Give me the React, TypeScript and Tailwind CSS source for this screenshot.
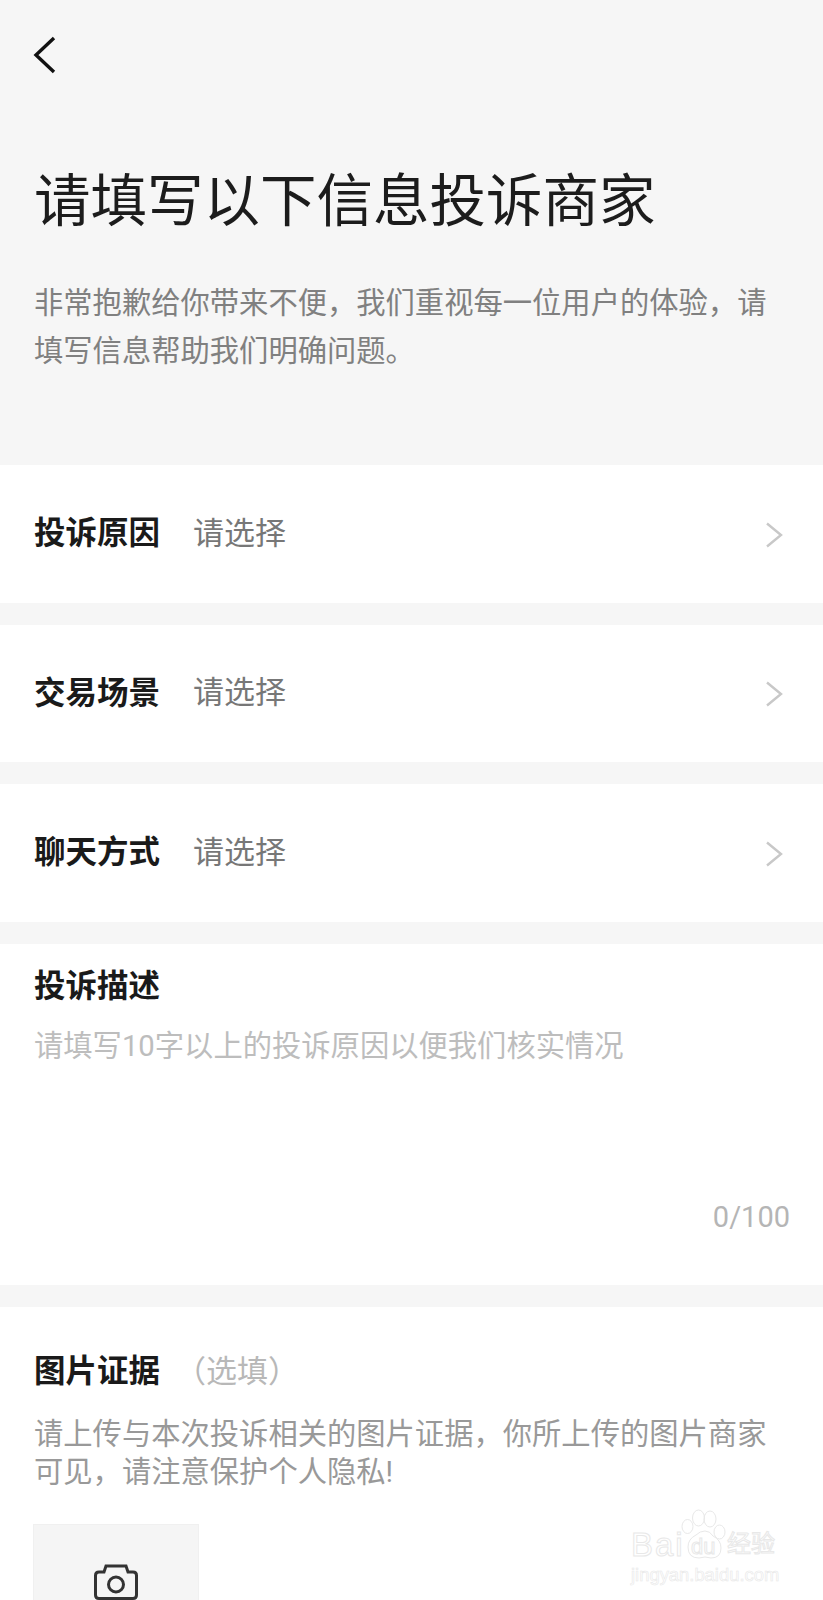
const cjk = "font-['Roboto','Noto_Sans_CJK_SC',sans-serif]";

const Chevron = () => (
  <svg width="20" height="28" viewBox="0 0 20 28" fill="none" stroke="#c8c8c8" strokeWidth="2.4" className="mt-[2px]">
    <path d="M3 2.5 L17 14 L3 25.5" />
  </svg>
);

const SelectRow = ({ label }: { label: string }) => (
  <div className="h-[137.5px] bg-white flex items-center pl-[34px] pr-[39px]">
    <div className="w-[159px] text-[31.5px] font-bold text-[#1a1a1a]">{label}</div>
    <div className="flex-1 text-[31px] text-[#777777]">请选择</div>
    <Chevron />
  </div>
);

const outline = "text-transparent [-webkit-text-stroke:1px_#e8e8e8] font-['Liberation_Sans',sans-serif]";

export default function App() {
  return (
    <div className={`${cjk} w-[823px] h-[1600px] overflow-hidden bg-[#f6f6f6] relative`}>
      <div className="h-[465px] pl-[34px] pr-[40px] pt-[36px]">
        <svg width="26" height="38" viewBox="0 0 26 38" fill="none" stroke="#111111" strokeWidth="3.4" className="-ml-[2px]">
          <path d="M22 2 L4 19 L22 36" />
        </svg>
        <h1 className="mt-[88px] text-[56.5px] leading-[80px] font-normal text-[#1c1c1c] whitespace-nowrap">请填写以下信息投诉商家</h1>
        <p className="mt-[37px] text-[29.3px] leading-[48px] text-[#808080]">
          非常抱歉给你带来不便，我们重视每一位用户的体验，请填写信息帮助我们明确问题。
        </p>
      </div>

      <div className="flex flex-col gap-[22px]">
        <SelectRow label="投诉原因" />
        <SelectRow label="交易场景" />
        <SelectRow label="聊天方式" />

        <div className="h-[341px] bg-white pl-[34px] pr-[33px] pt-[20px] flex flex-col">
          <div className="text-[31.5px] leading-[46px] font-bold text-[#1a1a1a]">投诉描述</div>
          <div className="mt-[14px] text-[29.3px] leading-[44px] text-[#bdbdbd]">请填写10字以上的投诉原因以便我们核实情况</div>
          <div className="mt-[127px] text-right text-[29px] leading-[44px] text-[#b5b5b5]">0/100</div>
        </div>

        <div className="bg-white pl-[34px] pr-[40px] pt-[33px] h-[400px]">
          <div className="flex items-center">
            <div className="text-[31.5px] leading-[64px] font-bold text-[#1a1a1a]">图片证据</div>
            <div className="ml-[15px] text-[31px] leading-[64px] text-[#b8b8b8]">（选填）</div>
          </div>
          <p className="mt-[11px] text-[29.3px] leading-[38.5px] text-[#999999]">
            请上传与本次投诉相关的图片证据，你所上传的图片商家可见，请注意保护个人隐私!
          </p>
          <div className="mt-[32px] -ml-[1px] w-[166px] h-[166px] bg-[#f5f5f5] border border-[#f0f0f0] flex justify-center pt-[39px]">
            <svg width="44" height="36" viewBox="0 0 44 36" fill="none" stroke="#333333" strokeWidth="3">
              <path d="M5 8 H10 L12 2 H32 L34 8 H39 Q42.5 8 42.5 11.5 V31 Q42.5 34.5 39 34.5 H5 Q1.5 34.5 1.5 31 V11.5 Q1.5 8 5 8 Z" />
              <circle cx="22" cy="20.5" r="7.5" />
            </svg>
          </div>
        </div>
      </div>

      {/* watermark */}
      <div className="absolute left-[631px] top-[1505px] w-[152px] h-[85px]">
        <div className={`absolute left-0 top-[22px] text-[33px] leading-[36px] tracking-[2px] ${outline}`}>Bai</div>
        <svg width="50" height="56" viewBox="0 0 50 56" fill="none" stroke="#e8e8e8" strokeWidth="1" className="absolute left-[49px] top-0">
          <ellipse cx="7.5" cy="21.5" rx="5.5" ry="7" />
          <ellipse cx="18.5" cy="13" rx="6" ry="8" />
          <ellipse cx="30" cy="14" rx="6" ry="8" />
          <ellipse cx="39.5" cy="27" rx="5.5" ry="7" />
          <path d="M8 42 Q8 34 16 30 Q20 26 25 26 Q30 26 33 31 Q41 35 41 43 Q41 53 31 53 Q25 51 19 53 Q8 53 8 42 Z" />
        </svg>
        <div className={`absolute left-[60px] top-[30px] text-[22px] leading-[24px] ${outline}`}>du</div>
        <div className="absolute left-[96px] top-[20px] text-[24px] leading-[34px] text-transparent [-webkit-text-stroke:1px_#e8e8e8] font-['Noto_Sans_CJK_SC',sans-serif]">经验</div>
        <div className="absolute left-0 top-[58px] text-[18.4px] leading-[24px] whitespace-nowrap text-transparent [-webkit-text-stroke:0.6px_#e8e8e8] font-['Liberation_Sans',sans-serif]">jingyan.baidu.com</div>
      </div>
    </div>
  );
}
